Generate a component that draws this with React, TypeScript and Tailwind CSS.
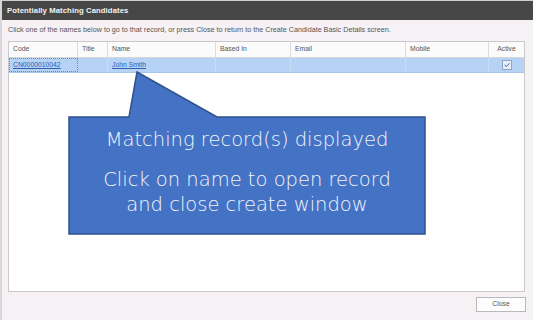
import { FaCheck } from 'react-icons/fa6'

const columns = [
    { label: 'Code', width: 'w-[69px]' },
    { label: 'Title', width: 'w-[30px]' },
    { label: 'Name', width: 'w-[108px]' },
    { label: 'Based In', width: 'w-[75px]' },
    { label: 'Email', width: 'w-[115px]' },
    { label: 'Mobile', width: 'w-[83px]' },
]

export default function App() {
    return (
        <div className="relative w-[533px] h-[320px] overflow-hidden bg-[#f5f1f4] flex flex-col font-['Liberation_Sans',sans-serif] border-l-2 border-[#d9d6da]">
            {/* title bar */}
            <div className="h-[20px] bg-[#474747] border-t border-[#cfcfcf] flex items-center px-[5px] shrink-0">
                <span className="text-[7.7px] font-bold text-[#f2f2f2] tracking-[0.1px]">Potentially Matching Candidates</span>
            </div>

            <div className="flex flex-col flex-1 px-[6px]">
                <div className="h-[21px] flex items-center text-[7.2px] text-[#555]">
                    Click one of the names below to go to that record, or press Close to return to the Create Candidate Basic Details screen.
                </div>

                {/* grid */}
                <div className="w-[517px] h-[251px] border border-[#c9c9c9] bg-white flex flex-col text-[6.8px] text-[#555]">
                    <div className="flex h-[16px] bg-[#fbfbfb] border-b border-[#d6d6d6]">
                        {columns.map((c) => (
                            <div key={c.label} className={`${c.width} border-r border-[#dcdcdc] flex items-center pl-[4px]`}>{c.label}</div>
                        ))}
                        <div className="flex-1 flex items-center justify-center">Active</div>
                    </div>
                    <div className="flex h-[15px] bg-[#b6d2f4] border-b border-[#a9c5ea]">
                        <div className="w-[69px] border border-dotted border-[#6b88b0] flex items-center pl-[3px]">
                            <span className="text-[#2f5fb3] underline">CN0000010042</span>
                        </div>
                        <div className="w-[30px] border-r border-[#c8dcf5]" />
                        <div className="w-[108px] border-r border-[#c8dcf5] flex items-center pl-[4px]">
                            <span className="text-[#2f5fb3] underline">John Smith</span>
                        </div>
                        <div className="w-[75px] border-r border-[#c8dcf5]" />
                        <div className="w-[115px] border-r border-[#c8dcf5]" />
                        <div className="w-[83px] border-r border-[#c8dcf5]" />
                        <div className="flex-1 flex items-center justify-center">
                            <div className="w-[10px] h-[10px] border border-[#8fa6c4] bg-[#e6eefa] flex items-center justify-center">
                                <FaCheck className="text-[6px] text-[#4a6a96]" />
                            </div>
                        </div>
                    </div>
                </div>

                <div className="flex justify-end pt-[5px] pr-[1px]">
                    <button className="w-[50px] h-[15px] bg-[#fdfdfd] border border-[#b9b9b9] text-[6.8px] text-[#555]">Close</button>
                </div>
            </div>

            {/* callout overlay */}
            <svg className="absolute left-0 top-0" width="533" height="320" viewBox="0 0 533 320">
                <path d="M67 117 L127 117 L135 72 L215 117 L423 117 L423 234 L67 234 Z" fill="#4472c4" stroke="#2f528f" strokeWidth="1.5" />
            </svg>
            <div className="absolute left-[67px] top-[117px] w-[356px] h-[117px] flex flex-col items-center text-[#f4f6fb] font-['DejaVu_Sans',sans-serif] font-extralight text-[19.5px] leading-[25px]">
                <div className="mt-[10px]">Matching record(s) displayed</div>
                <div className="mt-[15px]">Click on name to open record</div>
                <div>and close create window</div>
            </div>
        </div>
    )
}
